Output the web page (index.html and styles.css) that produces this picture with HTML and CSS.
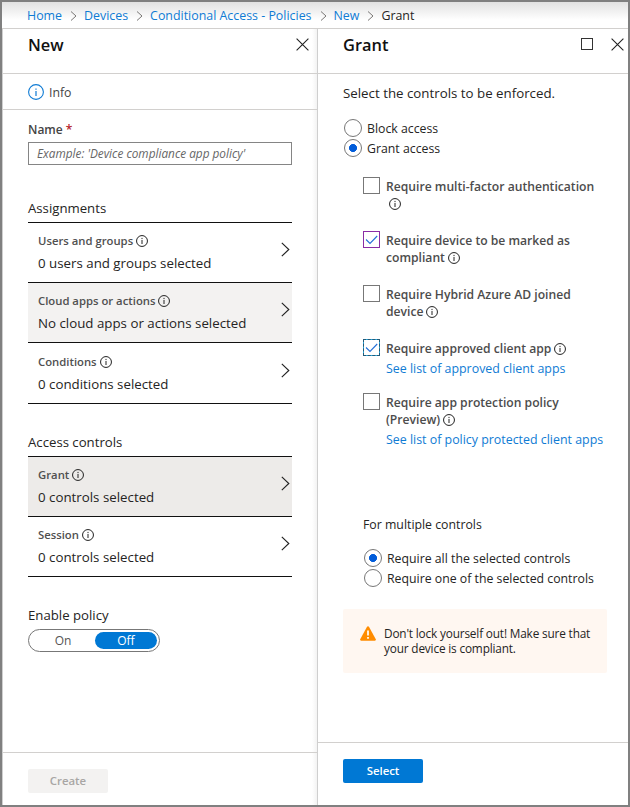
FILE: index.html
```html
<!DOCTYPE html>
<html lang="en">
<head>
<meta charset="utf-8">
<title>Grant - Conditional Access</title>
<link rel="stylesheet" href="styles.css">
</head>
<body>
<svg class="defs" width="0" height="0">
  <symbol id="info" viewBox="0 0 12 12"><circle cx="6" cy="6" r="5.45" fill="none" stroke="currentColor" stroke-width="1"/><path d="M6 5v4M6 2.9v1.2" fill="none" stroke="currentColor" stroke-width="1"/></symbol>
  <symbol id="info-lg" viewBox="0 0 16 16"><circle cx="8" cy="8" r="7.4" fill="none" stroke="currentColor" stroke-width="1.1"/><path d="M8 7v5M8 4.500v1.300" fill="none" stroke="currentColor" stroke-width="1.200"/></symbol>
  <symbol id="chev" viewBox="0 0 9 15"><path d="M.8.8 7.8 7.5.8 14.2" fill="none" stroke="currentColor" stroke-width="1.15"/></symbol>
  <symbol id="crumb" viewBox="0 0 7 10"><path d="M1 .5 6 5 1 9.500" fill="none" stroke="currentColor" stroke-width="1"/></symbol>
  <symbol id="close" viewBox="0 0 13 13"><path d="M.6.6l11.800 11.800M12.400.6.6 12.400" fill="none" stroke="currentColor" stroke-width="1.100"/></symbol>
  <symbol id="check" viewBox="0 0 15 15"><path d="M2 7.500 6 11.500 13.200 4" fill="none" stroke="currentColor" stroke-width="1.100"/></symbol>
</svg>
<div class="frame">
  <nav class="crumbs">
    <a>Home</a><svg><use href="#crumb"/></svg><a>Devices</a><svg><use href="#crumb"/></svg><a>Conditional Access - Policies</a><svg><use href="#crumb"/></svg><a>New</a><svg><use href="#crumb"/></svg><span>Grant</span>
  </nav>
  <div class="blades">
    <section class="blade left">
      <header class="head"><h1>New</h1><svg class="close"><use href="#close"/></svg></header>
      <div class="toolbar"><svg class="big-info"><use href="#info-lg"/></svg><span>Info</span></div>
      <div class="body">
        <div class="label">Name <b>*</b></div>
        <div class="input"><span>Example: 'Device compliance app policy'</span></div>
        <h2 class="assign">Assignments</h2>
        <div class="list">
          <div class="item"><div><div class="name">Users and groups<svg class="info"><use href="#info"/></svg></div><div class="value">0 users and groups selected</div></div><svg class="chev"><use href="#chev"/></svg></div>
          <div class="item hover"><div><div class="name">Cloud apps or actions<svg class="info"><use href="#info"/></svg></div><div class="value">No cloud apps or actions selected</div></div><svg class="chev"><use href="#chev"/></svg></div>
          <div class="item tall"><div><div class="name">Conditions<svg class="info"><use href="#info"/></svg></div><div class="value">0 conditions selected</div></div><svg class="chev"><use href="#chev"/></svg></div>
        </div>
        <h2 class="access">Access controls</h2>
        <div class="list">
          <div class="item active"><div><div class="name">Grant<svg class="info"><use href="#info"/></svg></div><div class="value">0 controls selected</div></div><svg class="chev"><use href="#chev"/></svg></div>
          <div class="item"><div><div class="name">Session<svg class="info"><use href="#info"/></svg></div><div class="value">0 controls selected</div></div><svg class="chev"><use href="#chev"/></svg></div>
        </div>
        <h2 class="enable">Enable policy</h2>
        <div class="toggle"><span>On</span><span class="on">Off</span></div>
      </div>
      <footer class="foot"><div class="btn disabled">Create</div></footer>
    </section>
    <section class="blade right">
      <header class="head"><h1>Grant</h1><i class="max"></i><svg class="close"><use href="#close"/></svg></header>
      <div class="body">
        <p class="lead">Select the controls to be enforced.</p>
        <div class="radio"><i></i><span>Block access</span></div>
        <div class="radio sel"><i></i><span>Grant access</span></div>
        <div class="checks">
          <div class="check"><i class="box"></i><div><div class="ct">Require multi-factor authentication<br><svg class="info"><use href="#info"/></svg></div></div></div>
          <div class="check"><i class="box purple"><svg><use href="#check"/></svg></i><div><div class="ct">Require device to be marked as<br>compliant<svg class="info"><use href="#info"/></svg></div></div></div>
          <div class="check"><i class="box"></i><div><div class="ct">Require Hybrid Azure AD joined<br>device<svg class="info"><use href="#info"/></svg></div></div></div>
          <div class="check"><i class="box focus"><svg><use href="#check"/></svg></i><div><div class="ct">Require approved client app<svg class="info"><use href="#info"/></svg></div><a>See list of approved client apps</a></div></div>
          <div class="check"><i class="box"></i><div><div class="ct">Require app protection policy<br>(Preview)<svg class="info"><use href="#info"/></svg></div><a>See list of policy protected client apps</a></div></div>
        </div>
        <div class="multi">
          <p>For multiple controls</p>
          <div class="radio sel"><i></i><span>Require all the selected controls</span></div>
          <div class="radio"><i></i><span>Require one of the selected controls</span></div>
        </div>
        <div class="warn">
          <svg viewBox="0 0 16 15"><path d="M8 .3q.7 0 1.100.7l6.700 12.200q.5 1.300-.9 1.500H1.100Q-.3 14.500.2 13.200L6.900 1Q7.300.3 8 .3z" fill="#ff8c00"/><path d="M8 4.500v5M8 11v1.800" stroke="#fff" stroke-width="1.700"/></svg>
          <div>Don't lock yourself out! Make sure that<br>your device is compliant.</div>
        </div>
      </div>
      <footer class="foot"><div class="btn primary">Select</div></footer>
    </section>
  </div>
</div>
</body>
</html>
```
FILE: styles.css
```css
* { box-sizing: border-box; }
body { margin: 0; font: 12.3px/18px "Open Sans", "Noto Sans", sans-serif; color: #252423; background: #fff; }
h1, h2, p { margin: 0; font-weight: 400; }
svg { display: block; flex: none; }
.defs { position: absolute; }
.frame { width: 630px; height: 807px; border: 2px solid #808080; display: flex; flex-direction: column; }
.crumbs { height: 27px; flex: none; display: flex; align-items: center; padding: 1px 0 0 25px; font-size: 12.4px; border-bottom: 1px solid #d2d0ce; background: linear-gradient(#e2e2e2, #fff 70%); }
.crumbs a { color: #0f7bd4; }
.crumbs svg { width: 7px; height: 10px; margin: 0 7px 0 8px; color: #797775; }
.blades { flex: 1; display: flex; min-height: 0; }
.blade { display: flex; flex-direction: column; border-left: 1px solid #cfcfcf; }
.left { width: 315px; flex: none; background: linear-gradient(to left, #f3f3f3, #fff 5px); }
.right { flex: 1; min-width: 0; }
.head { height: 45px; flex: none; display: flex; align-items: flex-start; padding: 5px 8px 0 25px; border-bottom: 1px solid #d2d0ce; }
h1 { flex: 1; font-size: 16.4px; line-height: 22px; font-weight: 600; color: #111; }
.close { width: 13px; height: 13px; margin-top: 4px; color: #222; }
.max { width: 12px; height: 12px; border: 1px solid #333; margin: 4px 18px 0 0; }
.right .head { padding-right: 4px; }
.toolbar { height: 36px; flex: none; display: flex; align-items: center; padding: 1px 0 0 25px; gap: 5px; color: #444; border-bottom: 1px solid #d2d0ce; }
.toolbar span { padding-top: 1px; }
.big-info { width: 16px; height: 16px; color: #0f7bd4; }
.body { flex: 1; padding: 0 25px; min-height: 0; }
.label { margin-top: 11px; height: 18px; font-weight: 600; font-size: 12px; color: #444; }
.label b { color: #b5202a; font-weight: 600; }
.input { height: 23px; margin-top: 3px; border: 1px solid #858585; padding: 0 8px; line-height: 21px; font-style: italic; font-size: 11.8px; color: #666; }
h2 { font-size: 13.2px; line-height: 18px; }
.assign { margin: 34px 0 5px; }
.access { margin: 29px 0 5px; }
.enable { margin: 29px 0 5px; }
.list { border-top: 1px solid #111; }
.item { height: 60px; border-bottom: 1px solid #111; padding: 9px 2px 0 10px; display: flex; justify-content: space-between; }
.tall { height: 61px; padding-top: 10px; }
.hover { background: #f3f2f1; }
.active { background: #edebe9; }
.name { display: flex; align-items: center; font-size: 11.3px; font-weight: 600; line-height: 18px; color: #505050; }
.value { font-size: 13.3px; margin-top: 4px; line-height: 18px; }
.info { width: 12px; height: 12px; color: #222; margin-left: 3px; }
.chev { width: 9px; height: 15px; margin-top: 10px; color: #222; }
.toggle { width: 132px; height: 23px; border: 1px solid #777; border-radius: 12px; padding: 2px; display: flex; font-size: 12px; line-height: 17px; color: #555; text-align: center; }
.toggle span { flex: 1; }
.toggle .on { flex: none; width: 62px; height: 17px; border-radius: 9px; background: #0078d4; color: #fff; }
.foot { flex: none; border-top: 1px solid #d2d0ce; padding: 16px 25px; }
.left .foot { height: 53px; }
.right .foot { height: 63px; }
.btn { width: 80px; height: 24px; border-radius: 2px; font-size: 11.4px; font-weight: 600; text-align: center; line-height: 24px; }
.disabled { background: #f3f2f1; color: #a8a6a4; }
.primary { background: #0078d4; color: #fff; }
.lead { font-size: 13.3px; margin: 10px 0 16px; }
.radio { display: flex; align-items: center; height: 20px; gap: 5px; margin-left: 1px; }
.radio span { padding-top: 1px; }
.radio i { width: 18px; height: 18px; border: 1px solid #777; border-radius: 50%; flex: none; }
.radio.sel i { background: radial-gradient(circle, #015cda 3.700px, #fff 4.300px); }
.checks { margin: 19px -20px 0 20px; }
.check { display: flex; gap: 6px; height: 54px; }
.box { width: 17px; height: 17px; border: 1px solid #777; flex: none; }
.box svg { width: 15px; height: 15px; color: #2470d8; }
.purple { border-color: #8a2da5; }
.focus { border: 1px dashed #245a78; background: linear-gradient(#fff, #fff) padding-box, #2aa5d8; }
.ct { font-size: 12.15px; font-weight: 600; line-height: 17px; color: #4c4c4c; padding-top: 1px; }
.ct .info { display: inline-block; vertical-align: -2px; }
.check a { display: block; font-size: 12.4px; color: #0f7bd4; line-height: 18px; margin-top: 3px; white-space: nowrap; }
.multi { margin: 69px -20px 0 19px; }
.multi p { padding-left: 1px; margin-bottom: 14px; }
.multi .radio { margin-left: 2px; }
.warn { display: flex; width: 264px; height: 64px; margin-top: 21px; border-radius: 2px; background: #fff7f1; padding: 17px 0 0 17px; gap: 8px; font-size: 11.8px; letter-spacing: -.16px; line-height: 15px; white-space: nowrap; }
.warn svg { width: 16px; height: 15px; }
```
